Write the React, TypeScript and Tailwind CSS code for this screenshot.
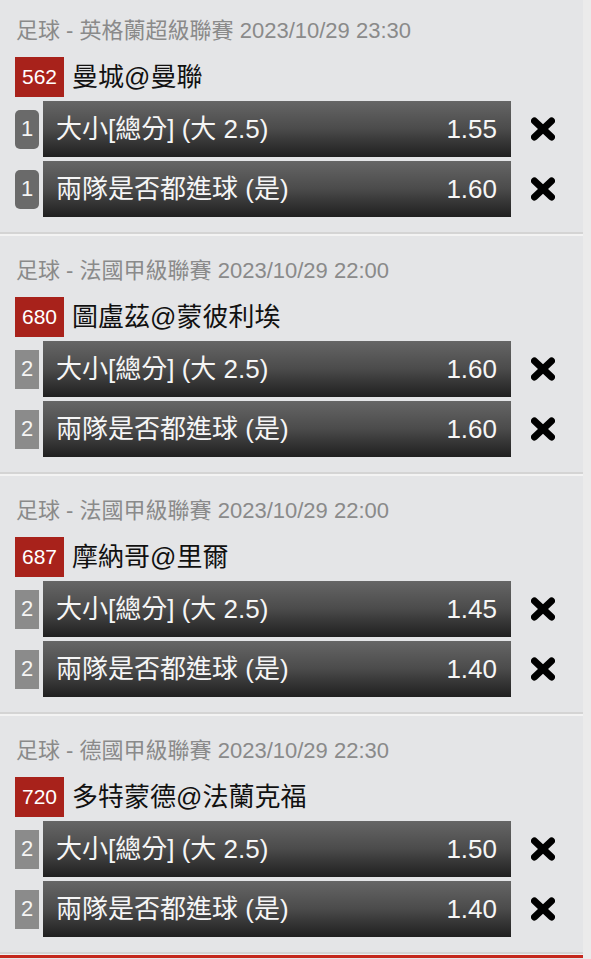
import React from "react";

type Bet = { label: string; odds: string };
type Match = {
  league: string;
  time: string;
  code: string;
  teams: string;
  tag: string;
  rounded: boolean;
  bets: Bet[];
};

const matches: Match[] = [
  {
    league: "足球 - 英格蘭超級聯賽",
    time: "2023/10/29 23:30",
    code: "562",
    teams: "曼城@曼聯",
    tag: "1",
    rounded: true,
    bets: [
      { label: "大小[總分] (大 2.5)", odds: "1.55" },
      { label: "兩隊是否都進球 (是)", odds: "1.60" },
    ],
  },
  {
    league: "足球 - 法國甲級聯賽",
    time: "2023/10/29 22:00",
    code: "680",
    teams: "圖盧茲@蒙彼利埃",
    tag: "2",
    rounded: false,
    bets: [
      { label: "大小[總分] (大 2.5)", odds: "1.60" },
      { label: "兩隊是否都進球 (是)", odds: "1.60" },
    ],
  },
  {
    league: "足球 - 法國甲級聯賽",
    time: "2023/10/29 22:00",
    code: "687",
    teams: "摩納哥@里爾",
    tag: "2",
    rounded: false,
    bets: [
      { label: "大小[總分] (大 2.5)", odds: "1.45" },
      { label: "兩隊是否都進球 (是)", odds: "1.40" },
    ],
  },
  {
    league: "足球 - 德國甲級聯賽",
    time: "2023/10/29 22:30",
    code: "720",
    teams: "多特蒙德@法蘭克福",
    tag: "2",
    rounded: false,
    bets: [
      { label: "大小[總分] (大 2.5)", odds: "1.50" },
      { label: "兩隊是否都進球 (是)", odds: "1.40" },
    ],
  },
];

function XIcon() {
  return (
    <svg width="28" height="26" viewBox="0 0 28 26" className="block">
      <g stroke="#000" strokeWidth="7" strokeLinecap="round" style={{ filter: "blur(0.6px)" }}>
        <line x1="5.5" y1="5" x2="22.5" y2="21" />
        <line x1="22.5" y1="5" x2="5.5" y2="21" />
      </g>
    </svg>
  );
}

function BetRow({ bet, tag, rounded }: { bet: Bet; tag: string; rounded: boolean }) {
  return (
    <div className="flex items-center h-[56px]">
      <div
        className={
          rounded
            ? "w-[24px] h-[39px] rounded-[5px] bg-[#6a6a6a] text-[#f4f4f4] text-[22px] leading-none flex items-center justify-center"
            : "w-[24px] h-[39px] bg-[#8b8b8b] text-[#f4f4f4] text-[22px] leading-none flex items-center justify-center"
        }
      >
        {tag}
      </div>
      <div className="ml-[4px] w-[468px] h-[56px] bg-linear-to-b from-[#666666] via-[#4b4b4b] to-[#202020] flex items-center justify-between pl-[13px] pr-[14px] text-[#f6f6f6] text-[26px] leading-none">
        <span className="-mt-[1px]">{bet.label}</span>
        <span className="-mt-[1px]">{bet.odds}</span>
      </div>
      <div className="ml-[18px] flex items-center">
        <XIcon />
      </div>
    </div>
  );
}

export default function App() {
  return (
    <div
      className="w-[591px] h-[959px] overflow-hidden flex bg-[#ebebeb]"
      style={{ fontFamily: '"Liberation Sans", "Noto Sans CJK TC", sans-serif' }}
    >
      <div className="w-[583px] bg-[#e4e5e7] flex flex-col">
        {matches.map((m, i) => (
          <div
            key={i}
            className={
              i === 0
                ? "pt-[14px] pb-[15px] pl-[15px] border-b-2 border-[#d4d4d4]"
                : "pt-[18px] pb-[15px] pl-[15px] border-t-2 border-t-[#f3f3f3] border-b-2 border-b-[#d4d4d4]"
            }
          >
            <div className="h-[34px] flex items-center text-[22px] text-[#8a8a8a] pl-[1px] leading-none">
              {m.league} {m.time}
            </div>
            <div className="mt-[9px] flex items-center h-[40px]">
              <div className="w-[49px] h-[40px] bg-[#a8221b] text-white text-[21px] flex items-center justify-center">
                {m.code}
              </div>
              <div className="ml-[8px] text-[26px] text-[#111] leading-none">{m.teams}</div>
            </div>
            <div className="mt-[4px] flex flex-col gap-[4px]">
              {m.bets.map((b, j) => (
                <BetRow key={j} bet={b} tag={m.tag} rounded={m.rounded} />
              ))}
            </div>
          </div>
        ))}
        <div className="border-t border-[#f0f0f0] h-[4px] bg-[#c4281d]" />
      </div>
    </div>
  );
}
